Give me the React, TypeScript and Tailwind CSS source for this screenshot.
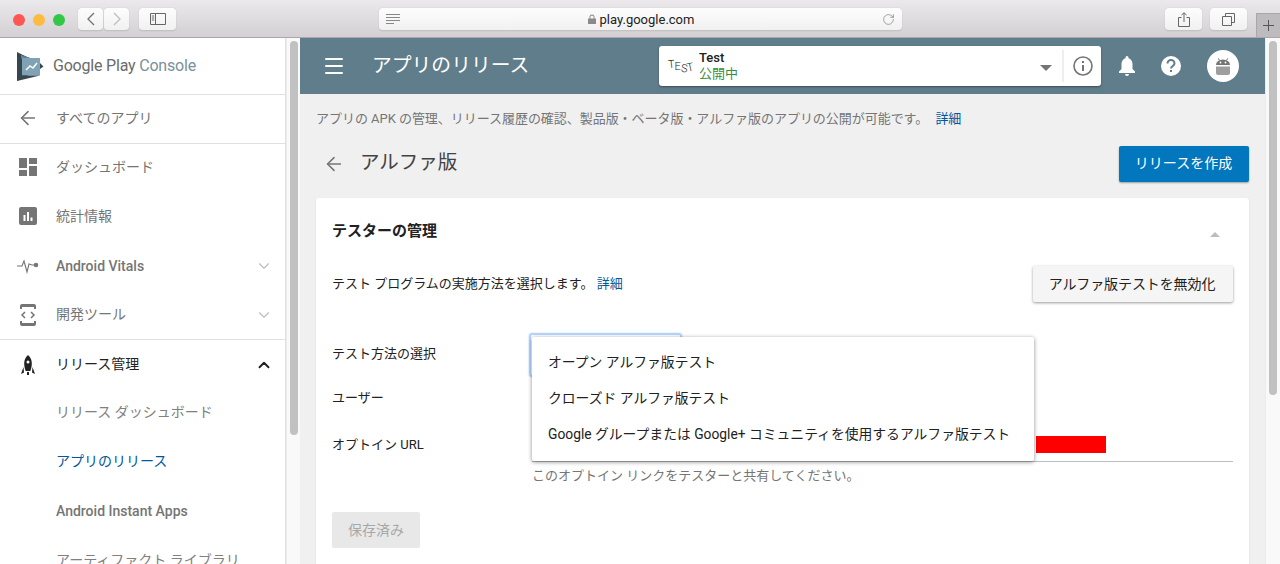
import { ArrowLeft, ChevronDown, ChevronUp, Menu, RotateCw } from 'lucide-react';
import type { ReactNode } from 'react';

const font = "font-['Roboto','Noto_Sans_CJK_JP',sans-serif]";

function ToolButton({ children, className }: { children: ReactNode; className: string }) {
  return (
    <div className={`flex h-[23px] items-center rounded-[4px] border-b border-[#c4c2c4] bg-gradient-to-b from-[#fdfdfd] to-[#f1f1f1] shadow-[0_0_1px_rgba(0,0,0,0.25)] ${className}`}>
      {children}
    </div>
  );
}

function SafariBar() {
  return (
    <div className="relative flex h-[38px] items-start border-b border-[#a9a7a9] bg-gradient-to-b from-[#ebe9eb] to-[#d2d0d2] pt-[8px]">
      <div className="ml-[13px] flex h-[23px] items-center gap-[8px]">
        <span className="h-3 w-3 rounded-full bg-[#fc5753]" />
        <span className="h-3 w-3 rounded-full bg-[#fdbc40]" />
        <span className="h-3 w-3 rounded-full bg-[#33c748]" />
      </div>
      <div className="ml-[13px] flex gap-[1px]">
        <ToolButton className="w-[25px] justify-center">
          <svg width="10" height="14" viewBox="0 0 10 14" fill="none" stroke="#707070" strokeWidth="1.3"><path d="M8 1 2 7l6 6" /></svg>
        </ToolButton>
        <ToolButton className="w-[25px] justify-center">
          <svg width="10" height="14" viewBox="0 0 10 14" fill="none" stroke="#bdbdbd" strokeWidth="1.3"><path d="m2 1 6 6-6 6" /></svg>
        </ToolButton>
      </div>
      <ToolButton className="ml-[10px] w-[37px] justify-center">
        <svg width="16" height="12" viewBox="0 0 16 12" fill="none" stroke="#666" strokeWidth="1"><path d="M.5.5h15v11H.5zM5.500.5v11M1.800 3h2.400M1.800 5h2.400M1.800 7h2.400" /></svg>
      </ToolButton>
      <ToolButton className="ml-[203px] w-[523px] justify-between px-[7px]">
        <svg width="14" height="10" viewBox="0 0 14 10" fill="none" stroke="#888" strokeWidth="1"><path d="M0 .5h14M0 3.500h14M0 6.500h14M0 9.500h8" /></svg>
        <span className={`${font} flex items-center gap-[4px] text-[13px] leading-none text-[#222]`}>
          <svg width="8" height="10" viewBox="0 0 8 10"><path fill="#8a8a8a" d="M0 4.500h8V10H0zM1.500 4.500V3a2.500 2.500 0 0 1 5 0v1.500H5.600V3a1.600 1.600 0 0 0-3.200 0v1.500z" /></svg>
          play.google.com
        </span>
        <RotateCw size={13} strokeWidth={1.2} className="text-[#777]" />
      </ToolButton>
      <ToolButton className="ml-[263px] w-[37px] justify-center">
        <svg width="12" height="15" viewBox="0 0 12 15" fill="none" stroke="#666" strokeWidth="1"><path d="M3.500 5.500H.5v9h11v-9h-3M6 10V1M3.500 3 6 .8 8.500 3" /></svg>
      </ToolButton>
      <ToolButton className="ml-[8px] w-[37px] justify-center">
        <svg width="13" height="13" viewBox="0 0 13 13" fill="none" stroke="#666" strokeWidth="1"><path d="M.5 3.500h9v9h-9zM3.500 3.500v-3h9v9h-3" /></svg>
      </ToolButton>
      <div className="absolute bottom-0 right-0 flex h-[24px] w-[24px] items-center justify-center border-l border-t border-[#a9a7a9] bg-[#bdbbbd]">
        <svg width="11" height="11" viewBox="0 0 11 11" stroke="#555" strokeWidth="1"><path d="M5.500 0v11M0 5.500h11" /></svg>
      </div>
    </div>
  );
}

function PlayLogo() {
  return (
    <svg width="27" height="29" viewBox="0 0 27 29">
      <path fill="#37474f" d="M0 0 6 3l17 8 3.500 3.500L23 17 6 26l-6 3z" />
      <path fill="#5f8498" d="M4 3 15 6.500H4z" />
      <path fill="#7fa3b5" d="M5 6h18v17.500H5z" />
      <path fill="#37474f" d="M0 29 23 23.500H2z" />
      <path fill="none" stroke="#fff" strokeWidth="1.500" d="M9 18l4-4 3 2 4-5" />
    </svg>
  );
}

function NavIcon({ name }: { name: string }) {
  if (name === 'back') return <ArrowLeft size={22} strokeWidth={1.7} className="text-[#757575]" />;
  if (name === 'dash')
    return (
      <svg width="18" height="18" viewBox="0 0 18 18" fill="#757575">
        <path d="M0 0h8v10H0zM10 0h8v6h-8zM0 12h8v6H0zM10 8h8v10h-8z" />
      </svg>
    );
  if (name === 'stats')
    return (
      <svg width="18" height="18" viewBox="0 0 18 18">
        <rect width="18" height="18" rx="2" fill="#757575" />
        <path fill="#fff" d="M4.500 8h2v6h-2zM8 5h2v9H8zM11.500 10.500h2V14h-2z" />
      </svg>
    );
  if (name === 'vitals')
    return (
      <svg width="22" height="18" viewBox="0 0 22 18" fill="none" stroke="#757575" strokeWidth="1.100">
        <path d="M0 9h5l2-5 3 11 2-8 3 1h3" />
        <circle cx="19" cy="8" r="1.700" fill="#757575" />
      </svg>
    );
  if (name === 'dev')
    return (
      <svg width="16" height="22" viewBox="0 0 16 22" fill="none">
        <path fill="#757575" d="M2 0h12a2 2 0 0 1 2 2v3h-2V3H2v2H0V2a2 2 0 0 1 2-2zM0 17h2v2h12v-2h2v3a2 2 0 0 1-2 2H2a2 2 0 0 1-2-2z" />
        <path stroke="#757575" strokeWidth="1.500" d="M5 8l-3 3 3 3M11 8l3 3-3 3" />
      </svg>
    );
  return (
    <svg width="14" height="20" viewBox="0 0 14 20">
      <path fill="#212121" d="M7 0c2.500 2 3.800 5 3.800 8.500 0 3-.8 5.500-1.500 7.500H4.700C4 14 3.200 11.500 3.200 8.500 3.200 5 4.500 2 7 0z" />
      <circle cx="7" cy="7" r="1.500" fill="#fff" />
      <path fill="#212121" d="M2.500 12 0 19l3-1.500zM11.500 12 14 19l-3-1.500zM6 17h2v3H6z" />
    </svg>
  );
}

function NavRow({ icon, label, h, color = 'text-[#757575]', bold, chevron, border }: {
  icon?: string;
  label: string;
  h: string;
  color?: string;
  bold?: boolean;
  chevron?: 'down' | 'up';
  border?: boolean;
}) {
  return (
    <div className={`flex shrink-0 items-center ${h} ${border ? 'border-b border-[#e0e0e0]' : ''}`}>
      <div className="flex w-[56px] shrink-0 justify-center">{icon && <NavIcon name={icon} />}</div>
      <span className={`flex-1 whitespace-nowrap text-[14px] ${bold ? 'font-medium' : ''} ${color}`}>{label}</span>
      {chevron === 'down' && <ChevronDown size={18} strokeWidth={1.500} className="mr-[12px] text-[#bdbdbd]" />}
      {chevron === 'up' && <ChevronUp size={18} strokeWidth={2.500} className="mr-[12px] text-[#212121]" />}
    </div>
  );
}

function Sidebar() {
  return (
    <div className="flex w-[286px] shrink-0 flex-col overflow-hidden border-r border-[#e0e0e0] bg-white">
      <div className="flex h-[57px] shrink-0 items-center gap-[9px] border-b border-[#e0e0e0] pl-[17px]">
        <PlayLogo />
        <span className="text-[16px] tracking-[-0.2px] text-[#6b6b6b]">
          Google Play <span className="text-[#78909c]">Console</span>
        </span>
      </div>
      <NavRow icon="back" label="すべてのアプリ" h="h-[49px] pb-[2px]" border />
      <NavRow icon="dash" label="ダッシュボード" h="h-[48px] pb-[2px]" />
      <NavRow icon="stats" label="統計情報" h="h-[50px] pb-[2px]" />
      <NavRow icon="vitals" label="Android Vitals" h="h-[50px] pb-[2px]" bold chevron="down" />
      <NavRow icon="dev" label="開発ツール" h="h-[48px] pb-[2px]" chevron="down" border />
      <NavRow icon="rocket" label="リリース管理" h="h-[49px]" color="text-[#212121]" chevron="up" />
      <NavRow label="リリース ダッシュボード" h="h-[49px] pb-[2px]" color="text-[#808080]" />
      <NavRow label="アプリのリリース" h="h-[49px] pb-[2px]" color="text-[#01579b]" />
      <NavRow label="Android Instant Apps" h="h-[50px] pb-[2px]" color="text-[#757575]" bold />
      <NavRow label="アーティファクト ライブラリ" h="h-[49px] pb-[2px]" color="text-[#808080]" />
    </div>
  );
}

function Scrollbar({ w, h }: { w: string; h: string }) {
  return (
    <div className={`flex shrink-0 justify-center border-l border-[#ececec] bg-[#f9f9f9] pt-[3px] ${w}`}>
      <div className={`w-[8px] rounded-full bg-[#c1c1c1] ${h}`} />
    </div>
  );
}

function TopBar() {
  return (
    <div className="flex h-[56px] shrink-0 items-center bg-[#607d8b]">
      <Menu size={24} strokeWidth={2} className="ml-[22px] text-white" />
      <h1 className="ml-[26px] w-[287px] text-[19.8px] font-normal text-white">アプリのリリース</h1>
      <div className="flex h-[40px] w-[442px] items-center rounded-[3px] bg-white shadow-[0_1px_2px_rgba(0,0,0,0.4)]">
        {/* app icon: handwritten TEST */}
        <span className="ml-[9px] flex w-[31px] text-[11px] font-light leading-none text-[#222]">
          <span className="-translate-y-[2px] -rotate-6">T</span>
          <span>E</span>
          <span className="translate-y-[2px] rotate-6">S</span>
          <span className="translate-y-[1px] -rotate-12">T</span>
        </span>
        <div className="flex-1 text-[13px] leading-[16px]">
          <div className="font-medium text-[#212121]">Test</div>
          <div className="text-[#388e3c]">公開中</div>
        </div>
        <svg width="12" height="6" viewBox="0 0 12 6" className="mr-[10px] mt-[3px]"><path fill="#757575" d="M0 0h12L6 6z" /></svg>
        <div className="flex h-[32px] w-[39px] items-center justify-center border-l-2 border-[#eeeeee]">
          <svg width="20" height="20" viewBox="0 0 20 20" fill="none" stroke="#757575" strokeWidth="1.600">
            <circle cx="10" cy="10" r="9" />
            <path strokeWidth="2" d="M10 9v6M10 5v2" />
          </svg>
        </div>
      </div>
      <svg width="18" height="20" viewBox="0 0 18 20" className="ml-[17px]">
        <path fill="#fff" d="M9 0a1.500 1.500 0 0 1 1.500 1.500v.7C13 3 14.500 5.200 14.500 8v5l2.500 2.500V17H1v-1.500L3.500 13V8c0-2.800 1.500-5 4-5.800v-.7A1.500 1.500 0 0 1 9 0zM7 18h4a2 2 0 0 1-4 0z" />
      </svg>
      <svg width="20" height="20" viewBox="0 0 20 20" className="ml-[25px]">
        <circle cx="10" cy="10" r="10" fill="#fff" />
        <path fill="none" stroke="#607d8b" strokeWidth="2" d="M6.500 7.500A3.500 3.500 0 0 1 13.500 7.500c0 2.500-3.500 2.500-3.500 5" />
        <rect x="9" y="14" width="2" height="2" fill="#607d8b" />
      </svg>
      <div className="ml-[26px] flex h-[32px] w-[32px] items-center justify-center rounded-full bg-white">
        <svg width="14" height="17" viewBox="0 0 14 17">
          <path fill="#757575" d="M0 7a7 5.500 0 0 1 14 0z" />
          <path stroke="#757575" strokeWidth="1" d="M3.500 2.500 2.300.3M10.500 2.500 11.700.3" />
          <circle cx="4.500" cy="4.500" r=".9" fill="#fff" />
          <circle cx="9.500" cy="4.500" r=".9" fill="#fff" />
          <path fill="#9e9e9e" d="M0 8.500h14V15a2 2 0 0 1-2 2H2a2 2 0 0 1-2-2z" />
        </svg>
      </div>
    </div>
  );
}

function FormRow({ label, h, children }: { label: string; h: string; children?: ReactNode }) {
  return (
    <div className={`flex items-center ${h}`}>
      <span className="w-[200px] shrink-0 pb-[2px] text-[13px] text-[#212121]">{label}</span>
      {children}
    </div>
  );
}

function Card() {
  return (
    <div className="relative ml-[16px] mt-[16px] h-[400px] w-[933px] rounded-t-[3px] bg-white px-[16px] shadow-[0_1px_2px_rgba(0,0,0,0.1)]">
      <div className="flex h-[68px] items-center justify-between">
        <h2 className="pb-[2px] text-[15px] font-bold text-[#212121]">テスターの管理</h2>
        <svg width="10" height="5" viewBox="0 0 10 5" className="mr-[13px] mt-[5px]"><path fill="#bdbdbd" d="M5 0l5 5H0z" /></svg>
      </div>
      <div className="flex h-[36px] items-center justify-between">
        <span className="text-[13px] text-[#212121]">
          テスト プログラムの実施方法を選択します。 <a className="text-[#01579b]">詳細</a>
        </span>
        <button className="h-[36px] w-[200px] rounded-[2px] bg-[#f5f5f5] pr-[2px] text-[14px] tracking-[-0.1px] text-[#212121] shadow-[0_1px_3px_rgba(0,0,0,0.4)]">
          アルファ版テストを無効化
        </button>
      </div>
      <div className="pt-[30px]">
        <FormRow label="テスト方法の選択" h="h-[45px]">
          <div className="-ml-[3px] h-[44px] w-[153px] rounded-[3px] border-2 border-[#b3d4fc] shadow-[0_0_2px_#b3d4fc]" />
        </FormRow>
        <FormRow label="ユーザー" h="h-[44px]" />
        <FormRow label="オプトイン URL" h="h-[50px]">
          <div className="flex h-[32px] flex-1 justify-end border-b border-[#bdbdbd] pr-[127px] pt-[6px]">
            <div className="h-[17px] w-[70px] bg-[#ff0000]" />
          </div>
        </FormRow>
        <p className="ml-[200px] mt-[-4px] text-[13px] leading-[18px] text-[#757575]">このオプトイン リンクをテスターと共有してください。</p>
        <button className="mt-[27px] h-[36px] w-[88px] rounded-[2px] bg-[#e8e8e8] text-[14px] text-[#a8a8a8]">保存済み</button>
      </div>
      {/* select menu opened over the form */}
      <div className="absolute left-[216px] top-[139px] flex h-[124px] w-[502px] flex-col justify-center rounded-[2px] bg-white text-[13.8px] text-[#212121] shadow-[0_1px_4px_rgba(0,0,0,0.45)]">
        {['オープン アルファ版テスト', 'クローズド アルファ版テスト', 'Google グループまたは Google+ コミュニティを使用するアルファ版テスト'].map((item) => (
          <div key={item} className="flex h-[36px] items-center px-[16px] pb-[1px]">{item}</div>
        ))}
      </div>
    </div>
  );
}

export default function App() {
  return (
    <div className={`${font} flex h-[564px] w-[1280px] flex-col overflow-hidden`}>
      <SafariBar />
      <div className="flex min-h-0 flex-1">
        <Sidebar />
        <Scrollbar w="w-[14px]" h="h-[394px]" />
        <div className="flex min-w-0 flex-1 flex-col bg-[#f0f0f0]">
          <TopBar />
          <p className="ml-[16px] mt-[16px] text-[13px] leading-[18px] tracking-[-0.04px] text-[#757575]">
            アプリの APK の管理、リリース履歴の確認、製品版・ベータ版・アルファ版のアプリの公開が可能です。 <a className="ml-[4px] text-[#01579b]">詳細</a>
          </p>
          <div className="ml-[16px] mt-[18px] flex h-[36px] w-[933px] items-center">
            <ArrowLeft size={22} strokeWidth={1.700} className="ml-[7px] text-[#757575]" />
            <h2 className="ml-[15px] flex-1 pb-[2px] text-[19.5px] font-normal text-[#424242]">アルファ版</h2>
            <button className="h-[36px] w-[130px] rounded-[2px] bg-[#0277bd] pb-[1px] pr-[1px] text-[14px] text-white shadow-[0_1px_2px_rgba(0,0,0,0.35)]">リリースを作成</button>
          </div>
          <Card />
        </div>
        <Scrollbar w="w-[15px]" h="h-[354px]" />
      </div>
    </div>
  );
}
